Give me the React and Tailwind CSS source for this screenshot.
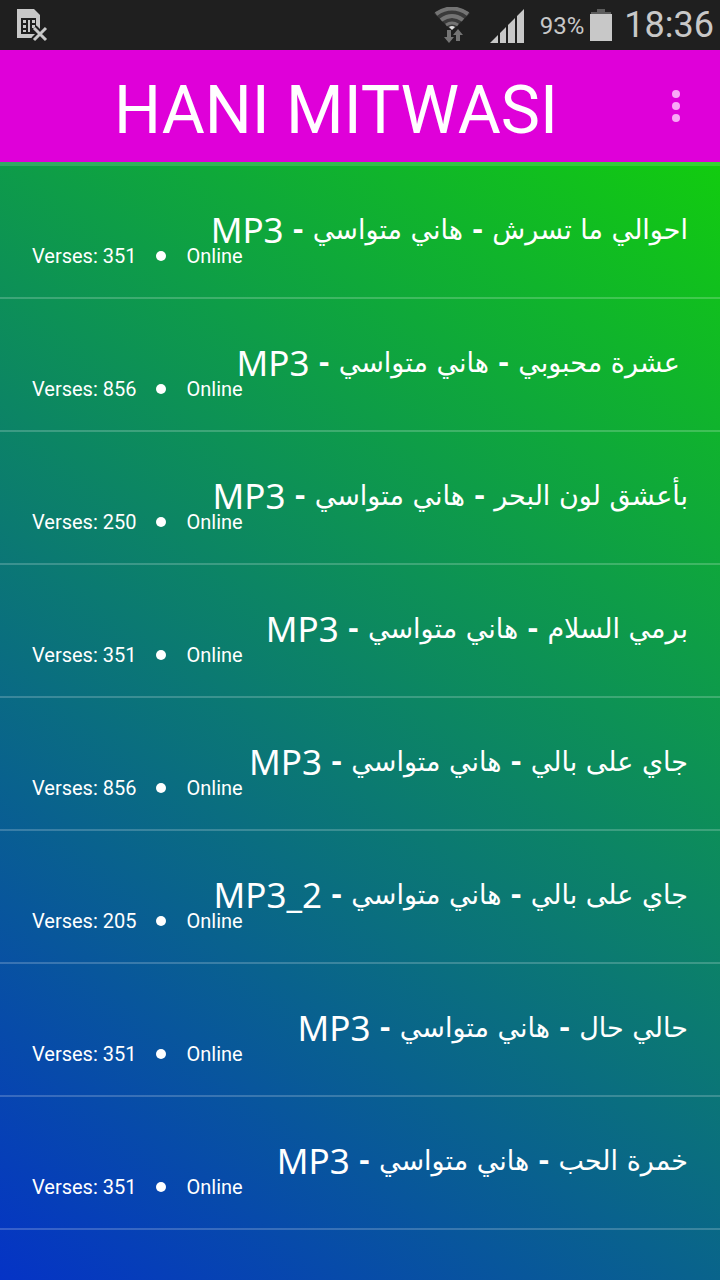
import React from 'react';

const artist = 'هاني متواسي';

const songs = [
  { title: 'احوالي ما تسرش', tag: 'MP3', verses: 351 },
  { title: 'عشرة محبوبي', tag: 'MP3', verses: 856, indent: true },
  { title: 'بأعشق لون البحر', tag: 'MP3', verses: 250 },
  { title: 'برمي السلام', tag: 'MP3', verses: 351 },
  { title: 'جاي على بالي', tag: 'MP3', verses: 856 },
  { title: 'جاي على بالي', tag: 'MP3_2', verses: 205 },
  { title: 'حالي حال', tag: 'MP3', verses: 351 },
  { title: 'خمرة الحب', tag: 'MP3', verses: 351 },
];

const SimIcon = () => (
  <svg width="32" height="34" viewBox="0 0 32 34" aria-hidden="true">
    <path d="M1 1h17l6 6v23H1z" fill="#c8c8c8" />
    <path d="M5 10h15v16H5z" fill="#1f1f1f" />
    <path
      d="M7 12h3v3H7zM7 17h3v3H7zM7 22h3v2H7zM12 12h2v12h-2zM16 12h3v3h-3zM16 17h3v3h-3z"
      fill="#c8c8c8"
    />
    <path d="m18 20 12 12M30 20 18 32" stroke="#1f1f1f" strokeWidth="7" />
    <path d="m18 20 12 12M30 20 18 32" stroke="#c8c8c8" strokeWidth="3" />
  </svg>
);

const WifiIcon = () => (
  <svg width="36" height="36" viewBox="0 0 36 36" fill="none" aria-hidden="true">
    <path d="M0 6Q18-6 36 6L20 22q-2-1-4 0z" fill="#3a3a3a" />
    <path d="M2 7Q18-4 34 7" stroke="#747474" strokeWidth="4" />
    <path d="M7 13Q18 5 29 13" stroke="#747474" strokeWidth="4" />
    <path d="M12 18Q18 14 24 18" stroke="#747474" strokeWidth="3" />
    <path d="M15 20q3-2 6 0l-3 3z" fill="#e0e0e0" />
    <path d="M13 23h4v7h3l-5 6-5-6h3zM22 34h4v-6h3l-5-6-5 6h3z" fill="#747474" />
  </svg>
);

const SignalIcon = () => (
  <svg width="34" height="34" viewBox="0 0 34 34" fill="#c8c8c8" aria-hidden="true">
    <path d="M0 34 8 26v8zM10 24l6-6v16h-6zM18 16l7-7v25h-7zM27 7l7-7v34h-7z" />
  </svg>
);

const BatteryIcon = () => (
  <svg width="22" height="32" viewBox="0 0 22 32" aria-hidden="true">
    <path d="M7 0h8v3h6v2H1V3h6z" fill="#5c5c5c" />
    <path d="M0 5h22v27H0z" fill="#c8c8c8" />
  </svg>
);

const StatusBar = () => (
  <div className="flex h-[50px] items-center justify-between bg-[#1f1f1f] pr-[6px] pl-4 font-[Roboto,sans-serif] text-[#c8c8c8]">
    <SimIcon />
    <div className="flex items-center">
      <WifiIcon />
      <div className="ml-5 pt-[2px]">
        <SignalIcon />
      </div>
      <span className="ml-4 pt-[2px] text-[24px] leading-[48px]">93%</span>
      <div className="ml-[6px]">
        <BatteryIcon />
      </div>
      <span className="ml-3 text-[36px] leading-[48px]">18:36</span>
    </div>
  </div>
);

const Header = () => (
  <header className="flex h-28 items-center bg-[#df00d9] font-[Roboto,sans-serif]">
    <h1 className="flex-1 pt-[10px] pl-10 text-center text-[66px] leading-[72px] whitespace-nowrap text-white">
      HANI MITWASI
    </h1>
    <button type="button" aria-label="More options" className="flex w-[88px] justify-center">
      <svg width="8" height="32" viewBox="0 0 8 32" fill="#f9a8f7">
        <circle cx="4" cy="4" r="4" />
        <circle cx="4" cy="16" r="4" />
        <circle cx="4" cy="28" r="4" />
      </svg>
    </button>
  </header>
);

const SongRow = ({ song }) => (
  <li className="h-[133px] border-b-2 border-white/20 px-8 pt-12">
    <p
      dir="rtl"
      className={
        song.indent
          ? "flex items-center gap-[9px] pr-2 font-['DejaVu_Sans',sans-serif] text-[27px] leading-8 whitespace-nowrap"
          : "flex items-center gap-[9px] font-['DejaVu_Sans',sans-serif] text-[27px] leading-8 whitespace-nowrap"
      }
    >
      <span>{song.title}</span>
      <span className="font-bold">-</span>
      <span>{artist}</span>
      <span className="font-bold">-</span>
      <span className="font-['Noto_Sans',sans-serif] text-[35px]">{song.tag}</span>
    </p>
    <div className="flex items-center font-[Roboto,sans-serif] text-[20px] leading-5">
      <span>Verses: {song.verses}</span>
      <span className="mx-5 size-[10px] rounded-full bg-white" />
      <span>Online</span>
    </div>
  </li>
);

const App = () => {
  return (
    <div className="flex min-h-screen flex-col">
      <StatusBar />
      <Header />
      <main className="flex-1 border-t-4 border-white/15 bg-[linear-gradient(36deg,#0533c6,#12cc0f)] bg-origin-border text-white">
        <ul>
          {songs.map((song, i) => (
            <SongRow key={i} song={song} />
          ))}
        </ul>
      </main>
    </div>
  );
};

export default App;
